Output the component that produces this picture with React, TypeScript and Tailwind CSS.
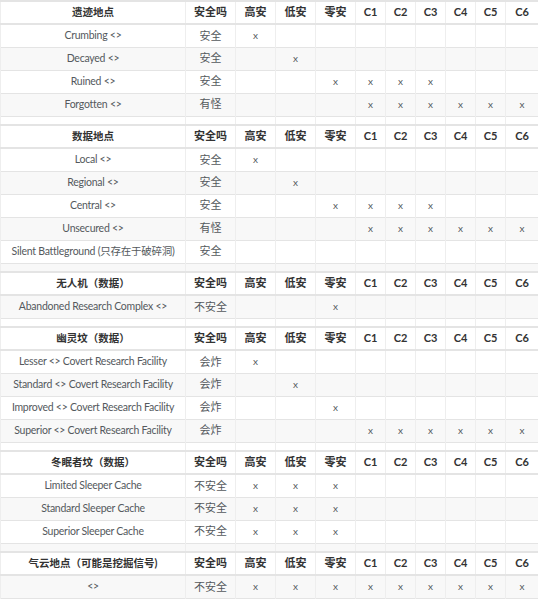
import React from "react";

type Section = {
  title: string;
  rows: { name: string; safe: string; marks: number[] }[];
};

// columns after "安全吗": 高安 低安 零安 C1..C6 -> indexes 0..8
const sections: Section[] = [
  {
    title: "遗迹地点",
    rows: [
      { name: "Crumbing <>", safe: "安全", marks: [0] },
      { name: "Decayed <>", safe: "安全", marks: [1] },
      { name: "Ruined <>", safe: "安全", marks: [2, 3, 4, 5] },
      { name: "Forgotten <>", safe: "有怪", marks: [3, 4, 5, 6, 7, 8] },
    ],
  },
  {
    title: "数据地点",
    rows: [
      { name: "Local <>", safe: "安全", marks: [0] },
      { name: "Regional <>", safe: "安全", marks: [1] },
      { name: "Central <>", safe: "安全", marks: [2, 3, 4, 5] },
      { name: "Unsecured <>", safe: "有怪", marks: [3, 4, 5, 6, 7, 8] },
      { name: "Silent Battleground (只存在于破碎洞)", safe: "安全", marks: [] },
    ],
  },
  {
    title: "无人机（数据）",
    rows: [{ name: "Abandoned Research Complex <>", safe: "不安全", marks: [2] }],
  },
  {
    title: "幽灵坟（数据）",
    rows: [
      { name: "Lesser <> Covert Research Facility", safe: "会炸", marks: [0] },
      { name: "Standard <> Covert Research Facility", safe: "会炸", marks: [1] },
      { name: "Improved <> Covert Research Facility", safe: "会炸", marks: [2] },
      { name: "Superior <> Covert Research Facility", safe: "会炸", marks: [3, 4, 5, 6, 7, 8] },
    ],
  },
  {
    title: "冬眠者坟（数据）",
    rows: [
      { name: "Limited Sleeper Cache", safe: "不安全", marks: [0, 1, 2] },
      { name: "Standard Sleeper Cache", safe: "不安全", marks: [0, 1, 2] },
      { name: "Superior Sleeper Cache", safe: "不安全", marks: [0, 1, 2] },
    ],
  },
  {
    title: "气云地点（可能是挖掘信号)",
    rows: [{ name: "<>", safe: "不安全", marks: [0, 1, 2, 3, 4, 5, 6, 7, 8] }],
  },
];

const cols = ["高安", "低安", "零安", "C1", "C2", "C3", "C4", "C5", "C6"];
const widths = ["w-[40px]", "w-[40px]", "w-[40px]", "w-[30px]", "w-[30px]", "w-[30px]", "w-[30px]", "w-[30px]", "w-[33px]"];

type Row =
  | { kind: "head"; title: string }
  | { kind: "data"; name: string; safe: string; marks: number[] }
  | { kind: "gap" };

const rows: Row[] = [];
sections.forEach((s, i) => {
  if (i > 0) rows.push({ kind: "gap" });
  rows.push({ kind: "head", title: s.title });
  s.rows.forEach((r) => rows.push({ kind: "data", ...r }));
});

const cell = "border-x border-[#eeeeee] p-0 text-center";

export default function App() {
  return (
    <div className="w-[538px] overflow-hidden bg-white font-['Lato','Noto_Sans_CJK_SC',sans-serif] text-[11px]">
      <table className="w-[538px] table-fixed border-collapse">
        <colgroup>
          <col className="w-[185px]" />
          <col className="w-[50px]" />
          {widths.map((w, i) => (
            <col key={i} className={w} />
          ))}
        </colgroup>
        <tbody>
          {rows.map((r, i) => {
            const odd = i % 2 === 0;
            if (r.kind === "gap") {
              return (
                <tr key={i} className={`h-[9px] border-b border-[#e4e4e4] ${odd ? "bg-[#f8f8f8]" : "bg-white"}`}>
                  <td className={cell} />
                  <td className={cell} />
                  {cols.map((c) => (
                    <td key={c} className={cell} />
                  ))}
                </tr>
              );
            }
            if (r.kind === "head") {
              return (
                <tr key={i} className="h-[23px] border-y-2 border-[#e4e4e4] bg-white font-bold text-[#333333]">
                  <th className={`${cell} text-[10.5px]`}>{r.title}</th>
                  <th className={cell}>安全吗</th>
                  {cols.map((c) => (
                    <th key={c} className={cell}>
                      {c}
                    </th>
                  ))}
                </tr>
              );
            }
            return (
              <tr key={i} className={`h-[23px] border-b border-[#e4e4e4] text-[#54595d] ${odd ? "bg-[#f8f8f8]" : "bg-white"}`}>
                <td className={`${cell} text-[10.5px] tracking-[-0.25px]`}>{r.name}</td>
                <td className={`${cell} text-[11px]`}>{r.safe}</td>
                {cols.map((c, j) => (
                  <td key={c} className={`${cell} text-[10px]`}>
                    {r.marks.includes(j) ? "x" : ""}
                  </td>
                ))}
              </tr>
            );
          })}
        </tbody>
      </table>
    </div>
  );
}
